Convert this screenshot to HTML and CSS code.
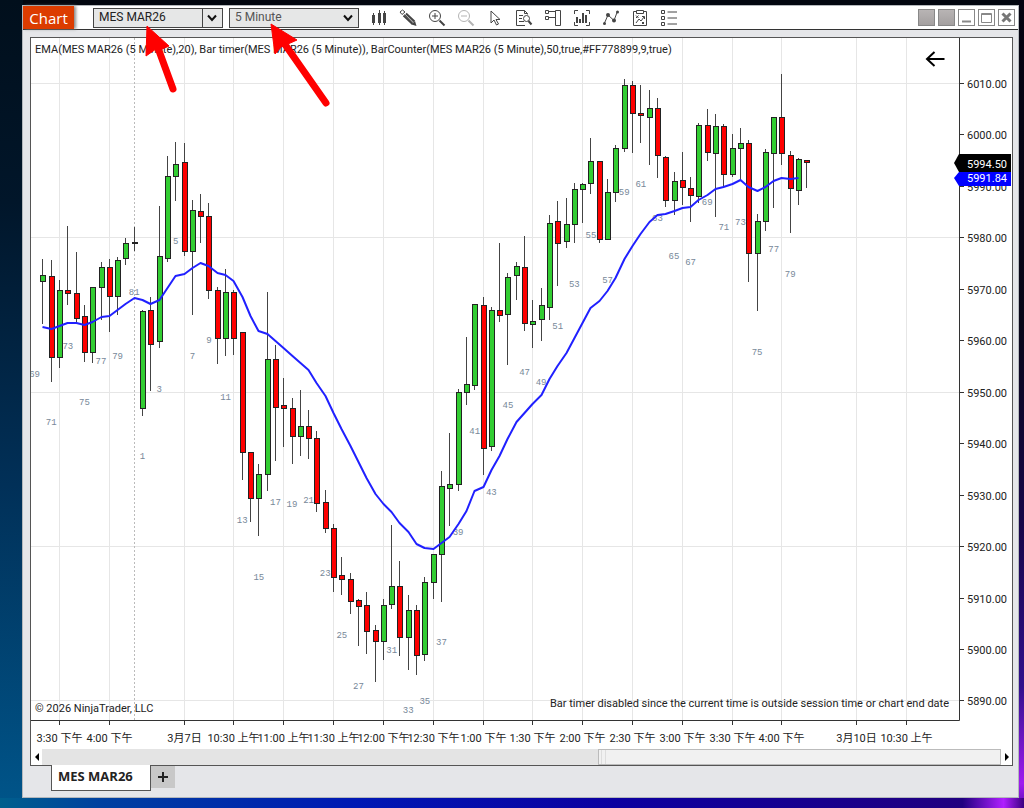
FILE: index.html
```html
<!DOCTYPE html>
<html lang="zh-TW">

<head>
  <meta charset="UTF-8">
  <meta name="viewport" content="width=device-width, initial-scale=1.0">
  <title>Chart - MES MAR26</title>
  <link rel="stylesheet" href="styles.css">
</head>

<body>
  <main class="window">
    <header class="toolbar">
      <h1 class="title">Chart</h1>
      <div class="combo combo-split">
        <select aria-label="Instrument">
          <option>MES MAR26</option>
        </select>
        <svg class="combo-arrow" viewBox="0 0 10 8"><path d="M1 1.5l4 4.5 4-4.5"/></svg>
      </div>
      <div class="combo combo-interval">
        <select aria-label="Interval">
          <option>5 Minute</option>
        </select>
        <svg class="combo-arrow" viewBox="0 0 10 8"><path d="M1 1.5l4 4.5 4-4.5"/></svg>
      </div>
      <nav class="tools">
        <button type="button" aria-label="Chart style">
          <svg viewBox="0 0 18 18"><path d="M3.500 4v12M9.500 1v15M14.500 2v14"/><path class="solid" d="M2 6h3v8H2zM8 4h3v10H8zM13 4h3v10h-3z"/></svg>
        </button>
        <button type="button" aria-label="Drawing tools">
          <svg viewBox="0 0 18 18"><path d="M1 3l2.500-2 2.500 2-3 2.500z"/><path class="thick" d="M4.500 6.500l9 8.500M7 4.500l8.500 8"/><path d="M5.500 5.500l9 8.500"/><path class="solid" d="M12.500 15.500l3.500-3.500 1.500 5z"/></svg>
        </button>
        <button type="button" aria-label="Zoom in">
          <svg viewBox="0 0 18 18"><circle cx="7" cy="7" r="5.500"/><path d="M4 7h6M7 4v6"/><path class="thick" d="M11.500 11.500l5 5"/></svg>
        </button>
        <button type="button" aria-label="Zoom out" disabled>
          <svg viewBox="0 0 18 18"><circle cx="7" cy="7" r="5.500"/><path d="M4 7h6"/><path class="thick" d="M11.500 11.500l5 5"/></svg>
        </button>
        <button type="button" aria-label="Cursor">
          <svg viewBox="0 0 18 18"><path d="M5 2v12l3-3 2.500 5 2-1-2.500-4.500h4z"/></svg>
        </button>
        <button type="button" aria-label="Data box">
          <svg viewBox="0 0 18 18"><path d="M10 16.500H1.500v-15h8l3 3v1M9.500 1.500v3h3M4 6.500h4M4 9.500h3M4 12.500h5"/><circle cx="11.500" cy="9.500" r="3"/><path class="thick" d="M13.500 12l3 3.500"/></svg>
        </button>
        <button type="button" aria-label="Chart trader">
          <svg viewBox="0 0 18 18"><path d="M1.500 1.500h3v3h-3zM1.500 7.500h3v3h-3zM4.500 2.500h7M4.500 8.500h7M11.500 1.500h5v15h-5z"/></svg>
        </button>
        <button type="button" aria-label="Indicators">
          <svg viewBox="0 0 18 18"><path d="M1.500 5V1.500H5M13 1.500h3.500V5M1.500 13v3.500H5M13 16.500h3.500V13"/><path class="thick" d="M4 8v6M7 10v4M10 4v10M13 6v8"/></svg>
        </button>
        <button type="button" aria-label="Strategies">
          <svg viewBox="0 0 18 18"><path d="M2.500 14l3.500-8 6 5.500 3-8"/><g class="solid"><circle cx="2.500" cy="14.500" r="1.500"/><circle cx="6" cy="6" r="2"/><circle cx="12" cy="11.500" r="2"/><circle cx="15.500" cy="3" r="1.500"/></g></svg>
        </button>
        <button type="button" aria-label="Strategy performance">
          <svg viewBox="0 0 18 18"><path d="M5.500 2.500h-3v14h13v-14h-3M5.500 1.500h7v3h-7zM5 14l3-4 2 2 3-4M11 7.500h2.500V10M5 6.500l2.500 2.500M7.500 6.500L5 9M11 13l2 2M13 13l-2 2"/></svg>
        </button>
        <button type="button" aria-label="Properties">
          <svg viewBox="0 0 18 18"><path d="M1.500 1.500h3v3h-3zM1.500 7.500h3v3h-3zM1.500 13.500h3v3h-3zM7.500 3h9.500M7.500 9h9.500M7.500 15h9.500"/></svg>
        </button>
      </nav>
      <div class="window-controls">
        <button type="button" class="link-box" aria-label="Instrument link"></button>
        <button type="button" class="link-box" aria-label="Interval link"></button>
        <button type="button" aria-label="Minimize"><svg viewBox="0 0 15 15"><path d="M3 11.500h9"/></svg></button>
        <button type="button" aria-label="Maximize"><svg viewBox="0 0 15 15"><path d="M3 4h9" /><path class="thin" d="M2.500 3.500h10v9h-10z"/></svg></button>
        <button type="button" aria-label="Close"><svg viewBox="0 0 15 15"><path class="cross" d="M3.500 3.500l8 8M11.500 3.500l-8 8"/></svg></button>
      </div>
    </header>

    <section class="panel">
      <svg id="chart" class="chart" viewBox="31 38 981 711" role="img" aria-label="MES MAR26 5 Minute"></svg>
      <div class="scrollbar">
        <button type="button" aria-label="Scroll left"><svg viewBox="0 0 4 8"><path d="M4 0v8L0 4z"/></svg></button>
        <div class="track">
          <div class="thumb"></div>
        </div>
        <button type="button" aria-label="Scroll right"><svg viewBox="0 0 4 8"><path d="M0 0v8l4-4z"/></svg></button>
      </div>
    </section>

    <footer class="tabs">
      <button type="button" class="tab">MES MAR26</button>
      <button type="button" class="tab-add" aria-label="Add tab"><svg viewBox="0 0 12 12"><path d="M6 1v10M1 6h10"/></svg></button>
    </footer>

    <svg class="pointers" width="320" height="110" viewBox="22 5 320 110" aria-hidden="true">
      <path class="head" d="M147 26l22 20-9 4-4-1-10 7z"/>
      <path class="shaft" d="M158 48l15 41"/>
      <path class="head" d="M271 24l26 16-9 4-7 3-6 7z"/>
      <path class="shaft" d="M284 43l42 60"/>
    </svg>
  </main>

  <script src="chart.js"></script>
</body>

</html>
```
FILE: styles.css
```css
* {
  box-sizing: border-box;
}

body {
  margin: 0;
  min-height: 100vh;
  padding: 5px 5px 10px 22px;
  font-family: "Open Sans", "Noto Sans", "Noto Sans CJK TC", sans-serif;
  font-size: 12px;
  color: #222;
  background:
    linear-gradient(90deg, #005f8c 0, #0040a0 10%, #0018b4 35%, #0c00a0 60%, #200080 94%, #b020ff 98%, #3a0080) bottom / 100% 10px no-repeat,
    linear-gradient(#030310 0, #080618 40%, #160648 65%, #30108c 85%, #a01cf0 97%, #5a10b0) right / 6px 100% no-repeat,
    linear-gradient(#010f1c 0, #01162a 25%, #013058 60%, #00558a 100%) left / 23px 100% no-repeat,
    #02060f;
}

button,
select {
  font: inherit;
  margin: 0;
  padding: 0;
}

/* window */
.window {
  position: relative;
  border: 1px solid #b4b8bc;
  background: #e5e6e9;
}

.toolbar {
  display: flex;
  align-items: center;
  height: 24px;
  padding-right: 3px;
  background: #fff;
  border-bottom: 1px solid #333;
}

.title {
  width: 51px;
  height: 23px;
  margin: 0 19px 0 0;
  line-height: 24px;
  text-align: center;
  font-size: 15px;
  font-weight: 400;
  color: #fff;
  background: #dc3c00;
  box-shadow: 2px 0 3px #888;
}

.combo {
  position: relative;
  width: 130px;
  height: 20px;
  margin-right: 6px;
}

.combo select {
  appearance: none;
  width: 100%;
  height: 100%;
  padding: 0 20px 2px 5px;
  border: 1px solid #444;
  border-radius: 0;
  background: #e6e7e7;
  color: #222;
  font-family: Roboto, sans-serif;
}

.combo-interval select {
  color: #555;
}

.combo-split::after {
  content: "";
  position: absolute;
  top: 0;
  right: 20px;
  width: 1px;
  height: 100%;
  background: #444;
}

.combo-arrow {
  position: absolute;
  top: 6px;
  right: 6px;
  width: 10px;
  height: 8px;
  fill: none;
  stroke: #111;
  stroke-width: 2;
  pointer-events: none;
}

.tools {
  display: flex;
}

.tools button {
  width: 29px;
  height: 20px;
  border: 0;
  background: none;
}

.tools svg {
  display: block;
  width: 18px;
  height: 18px;
  fill: none;
  stroke: #444;
  margin: 0 auto 0 5px;
}

.tools .solid {
  fill: #444;
  stroke: none;
}

.tools .thick {
  stroke-width: 2;
}

.tools button:disabled {
  opacity: 0.4;
}

.window-controls {
  display: flex;
  gap: 3px;
  margin-left: auto;
}

.window-controls button {
  width: 17px;
  height: 17px;
  border: 1px solid #888;
  background: #fff;
}

.window-controls .link-box {
  background: linear-gradient(#b8b4b4, #a4a0a0);
}

.window-controls svg {
  display: block;
  fill: none;
  stroke: #888;
  stroke-width: 2;
}

.window-controls .thin {
  stroke-width: 1;
}

.window-controls .cross {
  stroke: #777;
  stroke-width: 3;
}

/* chart */
.panel {
  margin: 7px 5px 0 7px;
  border: 1px solid #555;
  background: #fff;
}

.chart {
  display: block;
  width: 100%;
  height: auto;
  font-family: Roboto, "Noto Sans CJK TC", sans-serif;
  font-size: 11px;
}

.chart .grid {
  stroke: #e6e6e6;
}

.chart .session {
  stroke: #bbb;
  stroke-dasharray: 2 2;
}

.chart .axis {
  stroke: #333;
  fill: none;
}

.chart .time {
  text-anchor: middle;
}

.chart text {
  fill: #222;
}

.chart .count {
  font-family: "Liberation Mono", monospace;
  font-size: 9px;
  text-anchor: middle;
  fill: #778899;
}

.chart .wick {
  stroke: #444;
}

.chart .up,
.chart .down {
  stroke: #222;
  fill: #32cd32;
}

.chart .down {
  fill: #f00;
}

.chart .ema {
  fill: none;
  stroke: #2020ff;
  stroke-width: 2;
  stroke-linejoin: round;
}

.chart .tag-last {
  fill: #000;
}

.chart .tag-ema {
  fill: #00f;
}

.chart .tag-text {
  fill: #fff;
}

.chart .back {
  fill: none;
  stroke: #000;
  stroke-width: 2;
}

.scrollbar {
  display: flex;
  height: 16px;
}

.scrollbar button {
  width: 11px;
  border: 0;
  background: #fff;
}

.scrollbar svg {
  display: block;
  width: 4px;
  height: 8px;
  margin: 0 auto;
}

.track {
  display: flex;
  flex: 1;
  justify-content: flex-end;
  background: #e4e4e4;
}

.thumb {
  width: 42%;
  border: 1px solid #bbb;
  background: linear-gradient(90deg, transparent 2px, #ddd 2px, #ddd 3px, transparent 3px, transparent 6px, #ddd 6px, #ddd 7px, transparent 7px) #f1f1f1;
}

/* tabs */
.tabs {
  display: flex;
  align-items: flex-start;
  padding: 0 0 6px 28px;
}

.tab {
  width: 100px;
  height: 26px;
  padding: 0 8px 4px 6px;
  margin-top: -1px;
  position: relative;
  border: 1px solid #555;
  border-top: 0;
  background: #fff;
  color: #222;
  font-size: 13px;
  font-weight: 700;
  text-align: left;
}

.tab-add {
  width: 24px;
  height: 22px;
  border: 0;
  background: #c8c8c8;
}

.tab-add svg {
  display: block;
  width: 12px;
  height: 12px;
  margin: 0 auto;
  stroke: #222;
  stroke-width: 2;
}

/* red pointers over the selectors */
.pointers {
  position: absolute;
  top: -1px;
  left: -1px;
  pointer-events: none;
}

.pointers .head {
  fill: #f00;
  stroke: #f00;
  stroke-linejoin: round;
}

.pointers .shaft {
  stroke: #f00;
  stroke-width: 7;
  stroke-linecap: round;
}
```
FILE: chart.js
```js
const chart = document.getElementById('chart');

const FIRST_X = 42.9;
const STEP = 8.304;

// [direction, high, body top, body bottom, low]
const bars = [
  ['u', 259, 276, 282, 324], ['d', 260, 277, 358, 382], ['u', 280, 291, 358, 368],
  ['d', 226, 291, 294, 305], ['d', 252, 294, 319, 322], ['d', 305, 317, 353, 362],
  ['u', 287, 288, 353, 363], ['u', 262, 268, 288, 320], ['d', 259, 268, 297, 332],
  ['u', 257, 261, 297, 315], ['u', 238, 244, 259, 265], ['u', 227, 243, 244, 251],
  ['u', 310, 312, 409, 416], ['d', 297, 311, 345, 391], ['u', 206, 257, 342, 348],
  ['u', 156, 177, 259, 262], ['u', 142, 165, 177, 201], ['d', 143, 163, 252, 256],
  ['u', 200, 211, 252, 315], ['d', 194, 212, 217, 243], ['d', 203, 217, 291, 299],
  ['d', 287, 291, 339, 364], ['u', 269, 293, 339, 356], ['d', 290, 293, 339, 355],
  ['d', 333, 333, 453, 480], ['d', 453, 453, 499, 522], ['u', 464, 475, 499, 536],
  ['u', 292, 360, 475, 491], ['d', 345, 360, 408, 461], ['d', 378, 406, 409, 447],
  ['d', 398, 409, 437, 464], ['u', 390, 427, 437, 456], ['d', 410, 427, 439, 459],
  ['d', 431, 439, 504, 512], ['d', 490, 503, 529, 533], ['d', 524, 529, 578, 592],
  ['d', 557, 576, 580, 595], ['d', 573, 580, 602, 614], ['d', 599, 601, 607, 646],
  ['d', 592, 606, 632, 654], ['d', 625, 631, 642, 682], ['u', 599, 606, 642, 660],
  ['u', 525, 587, 605, 609], ['d', 561, 587, 638, 656], ['u', 595, 611, 638, 670],
  ['d', 605, 611, 656, 675], ['u', 577, 583, 655, 661], ['u', 554, 555, 583, 599],
  ['u', 471, 487, 555, 602], ['u', 433, 485, 489, 526], ['u', 389, 393, 485, 491],
  ['u', 337, 385, 393, 405], ['u', 304, 305, 386, 390], ['d', 297, 306, 449, 475],
  ['u', 307, 311, 447, 451], ['d', 243, 311, 316, 322], ['u', 273, 278, 315, 365],
  ['u', 262, 267, 276, 300], ['d', 236, 268, 324, 331], ['u', 300, 322, 325, 348],
  ['u', 288, 306, 320, 341], ['u', 215, 224, 308, 320], ['d', 201, 222, 244, 286],
  ['u', 198, 225, 242, 248], ['u', 183, 190, 225, 243], ['u', 183, 185, 190, 223],
  ['u', 138, 162, 184, 194], ['d', 162, 162, 240, 243], ['u', 179, 193, 240, 240],
  ['u', 145, 149, 193, 202], ['u', 79, 86, 149, 152], ['d', 81, 86, 114, 153],
  ['d', 85, 114, 116, 143], ['u', 90, 109, 118, 165], ['d', 98, 109, 156, 178],
  ['d', 156, 158, 201, 207], ['u', 172, 182, 201, 215], ['d', 152, 181, 188, 205],
  ['d', 177, 189, 196, 222], ['u', 123, 126, 197, 203], ['d', 109, 126, 153, 161],
  ['u', 114, 127, 154, 217], ['d', 124, 127, 175, 188], ['u', 134, 149, 175, 177],
  ['u', 128, 144, 149, 181], ['d', 140, 144, 254, 282], ['u', 214, 222, 254, 311],
  ['u', 149, 153, 222, 231], ['u', 118, 118, 154, 208], ['d', 74, 118, 154, 165],
  ['d', 151, 156, 189, 233], ['u', 158, 160, 191, 205], ['d', 160, 161, 163, 188]
];

const ema = [
  327, 329, 326, 323, 323, 325, 322, 317, 316, 310, 304, 298, 300, 304, 300, 288,
  276, 274, 268, 263, 266, 273, 275, 281, 297, 316, 331, 334, 341, 348, 356, 363,
  370, 383, 396, 413, 429, 446, 462, 478, 494, 504, 512, 523, 532, 544, 548, 549,
  543, 537, 524, 511, 491, 487, 470, 456, 439, 422, 413, 404, 395, 379, 366, 353,
  338, 323, 308, 301, 291, 278, 259, 246, 234, 222, 215, 214, 211, 208, 207, 200,
  195, 189, 187, 184, 180, 187, 191, 187, 181, 178, 179, 178
];

// bar index -> [bar number, y]
const counts = {
  '-1': [69, 374], 1: [71, 422], 3: [73, 346], 5: [75, 402], 7: [77, 361], 9: [79, 356],
  11: [81, 292], 12: [1, 456], 14: [3, 389], 16: [5, 241], 18: [7, 356], 20: [9, 340],
  22: [11, 397], 24: [13, 520], 26: [15, 577], 28: [17, 502], 30: [19, 504],
  32: [21, 500], 34: [23, 573], 36: [25, 635], 38: [27, 686], 42: [31, 650],
  44: [33, 710], 46: [35, 701], 48: [37, 642], 50: [39, 532], 52: [41, 431],
  54: [43, 492], 56: [45, 405], 58: [47, 372], 60: [49, 382], 62: [51, 326],
  64: [53, 284], 66: [55, 235], 68: [57, 280], 70: [59, 192], 72: [61, 184],
  74: [63, 218], 76: [65, 256], 78: [67, 262], 80: [69, 202], 82: [71, 227],
  84: [73, 222], 86: [75, 352], 88: [77, 249], 90: [79, 274]
};

// bar index -> label
const times = {
  2: '3:30 下午', 8: '4:00 下午', 17: '3月7日', 23: '10:30 上午', 29: '11:00 上午',
  35: '11:30 上午', 41: '12:00 下午', 47: '12:30 下午', 53: '1:00 下午', 59: '1:30 下午',
  65: '2:00 下午', 71: '2:30 下午', 77: '3:00 下午', 83: '3:30 下午', 89: '4:00 下午',
  98: '3月10日', 104: '10:30 上午'
};

function barX(i) {
  return Math.round(FIRST_X + STEP * i - 0.5) + 0.5;
}

function add(tag, className, attrs, text) {
  const el = document.createElementNS('http://www.w3.org/2000/svg', tag);
  el.setAttribute('class', className);
  for (const key in attrs) {
    el.setAttribute(key, attrs[key]);
  }
  if (text !== undefined) {
    el.textContent = text;
  }
  chart.appendChild(el);
}

// grid and axes
for (const i in times) {
  const x = barX(Number(i));
  add('path', 'grid', { d: `M${x} 38V720` });
  add('path', 'axis', { d: `M${x} 720v5` });
  add('text', 'time', { x: x, y: 742 }, times[i]);
}

for (let k = 0; k <= 12; k++) {
  const y = Math.round(83 + 51.45 * k) + 0.5;
  if (k % 3 === 0) {
    add('path', 'grid', { d: `M31 ${y}H959` });
  }
  add('path', 'axis', { d: `M959 ${y}h5` });
  add('text', 'price', { x: 967, y: y + 4 }, (6010 - k * 10).toFixed(2));
}

add('path', 'session', { d: 'M134.5 38V720' });
add('path', 'axis', { d: 'M31 720.5H959.5V38' });

// captions
add('text', 'caption', { x: 35, y: 53 }, 'EMA(MES MAR26 (5 Minute),20), Bar timer(MES MAR26 (5 Minute)), BarCounter(MES MAR26 (5 Minute),50,true,#FF778899,9,true)');
add('text', 'caption', { x: 35, y: 712 }, '© 2026 NinjaTrader, LLC');
add('text', 'caption', { x: 949, y: 707, 'text-anchor': 'end' }, 'Bar timer disabled since the current time is outside session time or chart end date');

// candles
bars.forEach(([dir, high, top, bottom, low], i) => {
  const x = barX(i);
  add('path', 'wick', { d: `M${x} ${high}V${low}` });
  add('rect', dir === 'u' ? 'up' : 'down', { x: x - 2, y: top - 0.5, width: 5, height: Math.max(bottom - top, 1) });
});

for (const i in counts) {
  add('text', 'count', { x: FIRST_X + STEP * i, y: counts[i][1] + 3 }, counts[i][0]);
}

add('polyline', 'ema', { points: ema.map((y, i) => `${barX(i)},${y}`).join(' ') });

// price markers
add('path', 'tag-last', { d: 'M954 163l5-9h52v18h-52z' });
add('path', 'tag-ema', { d: 'M954 178l5-6h52v14h-52z' });
add('text', 'price tag-text', { x: 967, y: 168 }, '5994.50');
add('text', 'price tag-text', { x: 967, y: 182 }, '5991.84');

add('path', 'back', { d: 'M944.500 59H927M934.500 52l-7.500 7 7.500 7' });
```
